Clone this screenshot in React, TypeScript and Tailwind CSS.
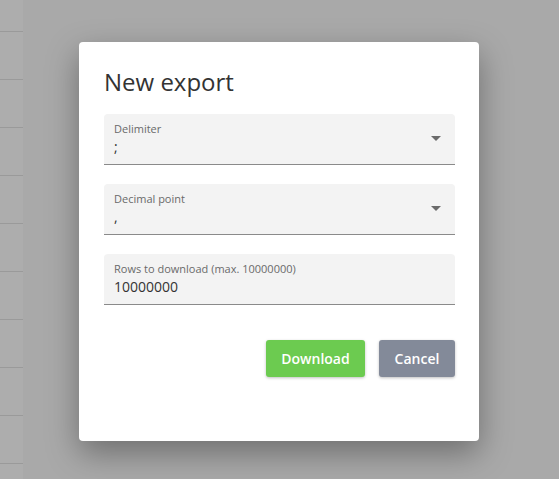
import React from "react";

function Caret() {
  return (
    <svg width="10" height="5" viewBox="0 0 10 5" className="shrink-0">
      <path d="M0 0 L10 0 L5 5 Z" fill="#6b6b6b" />
    </svg>
  );
}

function Field({ label, value, select }: { label: string; value: string; select?: boolean }) {
  return (
    <div className="flex h-[51px] items-start rounded-t-[4px] border-b border-[#8a8a8a] bg-[#f3f3f3] pl-[10px] pr-[14px] pt-[7px]">
      <div className="flex flex-1 flex-col">
        <span className="text-[11px] leading-[16px] font-normal text-[#6a6a6a]">{label}</span>
        <span className="text-[14px] leading-[20px] text-[#333]">{value}</span>
      </div>
      {select && (
        <div className="mt-[15px]">
          <Caret />
        </div>
      )}
    </div>
  );
}

export default function App() {
  const rows = Array.from({ length: 10 });
  return (
    <div className="relative h-[479px] w-[559px] overflow-hidden bg-[#a9a9a9]" style={{ fontFamily: '"Open Sans", "Liberation Sans", sans-serif' }}>
      <div className="flex w-[23px] flex-col bg-[#adadad] pt-[31px]">
        {rows.map((_, i) => (
          <div key={i} className="h-[48px] border-t border-[#9a9a9a]" />
        ))}
      </div>
      <div className="absolute inset-0 flex justify-start pl-[79px] pt-[42px]">
        <div className="flex h-[399px] w-[400px] flex-col rounded-[4px] bg-white pl-[25px] pr-[24px] pt-[24px] shadow-[0_12px_32px_rgba(0,0,0,0.35)]">
          <h1 className="text-[24px] leading-[32px] font-normal text-[#333]">New export</h1>
          <div className="mt-[16px] flex flex-col gap-[19px]">
            <Field label="Delimiter" value=";" select />
            <Field label="Decimal point" value="," select />
            <Field label="Rows to download (max. 10000000)" value="10000000" />
          </div>
          <div className="mt-[35px] flex justify-end gap-[14px]">
            <button className="h-[37px] w-[99px] rounded-[3px] bg-[#6ccb50] text-[14px] font-semibold text-white shadow-[0_1px_3px_rgba(0,0,0,0.25)]">
              Download
            </button>
            <button className="h-[37px] w-[76px] rounded-[3px] bg-[#838a99] text-[14px] font-semibold text-white shadow-[0_1px_3px_rgba(0,0,0,0.25)]">
              Cancel
            </button>
          </div>
        </div>
      </div>
    </div>
  );
}
